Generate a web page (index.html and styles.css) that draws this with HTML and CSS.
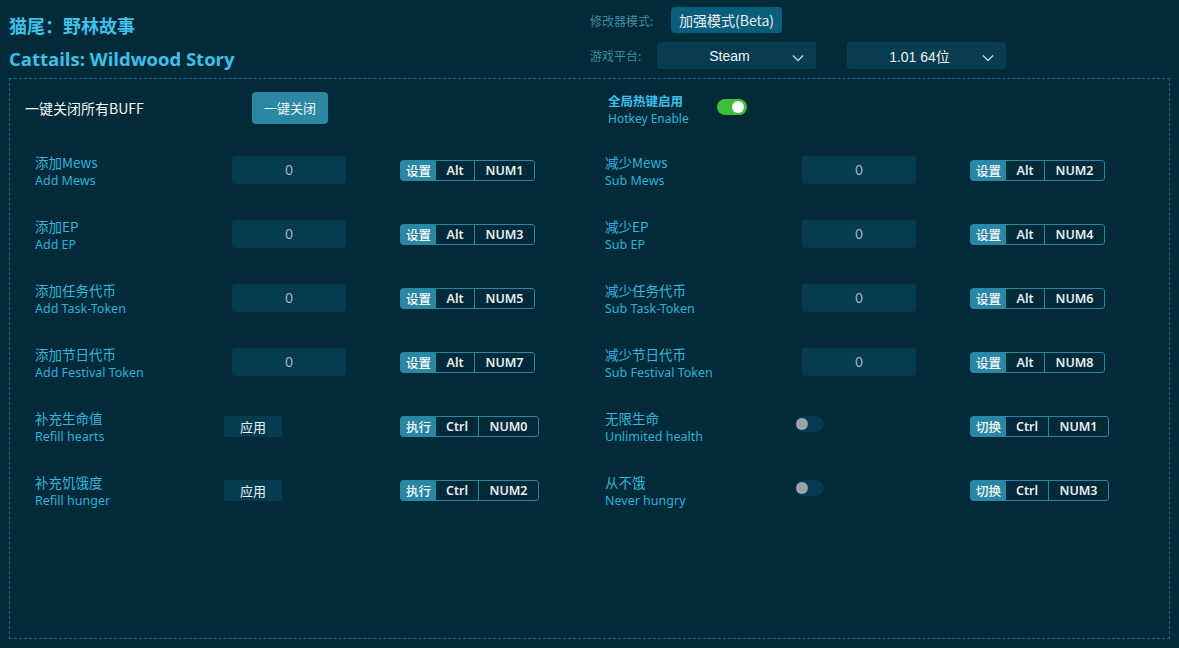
FILE: index.html
```html
<!DOCTYPE html>
<html lang="zh">
<head>
<meta charset="utf-8">
<link rel="stylesheet" href="styles.css">
</head>
<body>
<div class="page">
  <header class="header">
    <div class="titles">
      <div class="title-cn">猫尾：野林故事</div>
      <div class="title-en">Cattails: Wildwood Story</div>
    </div>
    <div class="settings">
      <div class="set-row">
        <span class="set-label">修改器模式:</span>
        <span class="mode-btn">加强模式(Beta)</span>
      </div>
      <div class="set-row">
        <span class="set-label">游戏平台:</span>
        <div class="select sel-platform"><span>Steam</span><svg class="chev" viewBox="0 0 12 8" width="12" height="8"><path d="M1 1.5 6 6.5 11 1.5" fill="none" stroke="#c8d6dc" stroke-width="1.3"/></svg></div>
        <div class="select sel-version"><span>1.01 64位</span><svg class="chev" viewBox="0 0 12 8" width="12" height="8"><path d="M1 1.5 6 6.5 11 1.5" fill="none" stroke="#c8d6dc" stroke-width="1.3"/></svg></div>
      </div>
    </div>
  </header>

  <main class="panel">
    <div class="top-row">
      <div class="buff">
        <span class="buff-label">一键关闭所有BUFF</span>
        <span class="btn-close">一键关闭</span>
      </div>
      <div class="hotkey-enable">
        <div class="he-text">
          <div class="he-cn">全局热键启用</div>
          <div class="he-en">Hotkey Enable</div>
        </div>
        <span class="toggle on"><span class="knob"></span></span>
      </div>
    </div>

    <div class="grid">
      <div class="item">
        <div class="lbl"><div class="cn">添加Mews</div><div class="en">Add Mews</div></div>
        <div class="ctl"><div class="num">0</div></div>
        <div class="hk"><span class="hk-a">设置</span><span class="hk-m">Alt</span><span class="hk-k">NUM1</span></div>
      </div>
      <div class="item">
        <div class="lbl"><div class="cn">减少Mews</div><div class="en">Sub Mews</div></div>
        <div class="ctl"><div class="num">0</div></div>
        <div class="hk"><span class="hk-a">设置</span><span class="hk-m">Alt</span><span class="hk-k">NUM2</span></div>
      </div>

      <div class="item">
        <div class="lbl"><div class="cn">添加EP</div><div class="en">Add EP</div></div>
        <div class="ctl"><div class="num">0</div></div>
        <div class="hk"><span class="hk-a">设置</span><span class="hk-m">Alt</span><span class="hk-k">NUM3</span></div>
      </div>
      <div class="item">
        <div class="lbl"><div class="cn">减少EP</div><div class="en">Sub EP</div></div>
        <div class="ctl"><div class="num">0</div></div>
        <div class="hk"><span class="hk-a">设置</span><span class="hk-m">Alt</span><span class="hk-k">NUM4</span></div>
      </div>

      <div class="item">
        <div class="lbl"><div class="cn">添加任务代币</div><div class="en">Add Task-Token</div></div>
        <div class="ctl"><div class="num">0</div></div>
        <div class="hk"><span class="hk-a">设置</span><span class="hk-m">Alt</span><span class="hk-k">NUM5</span></div>
      </div>
      <div class="item">
        <div class="lbl"><div class="cn">减少任务代币</div><div class="en">Sub Task-Token</div></div>
        <div class="ctl"><div class="num">0</div></div>
        <div class="hk"><span class="hk-a">设置</span><span class="hk-m">Alt</span><span class="hk-k">NUM6</span></div>
      </div>

      <div class="item">
        <div class="lbl"><div class="cn">添加节日代币</div><div class="en">Add Festival Token</div></div>
        <div class="ctl"><div class="num">0</div></div>
        <div class="hk"><span class="hk-a">设置</span><span class="hk-m">Alt</span><span class="hk-k">NUM7</span></div>
      </div>
      <div class="item">
        <div class="lbl"><div class="cn">减少节日代币</div><div class="en">Sub Festival Token</div></div>
        <div class="ctl"><div class="num">0</div></div>
        <div class="hk"><span class="hk-a">设置</span><span class="hk-m">Alt</span><span class="hk-k">NUM8</span></div>
      </div>

      <div class="item">
        <div class="lbl"><div class="cn">补充生命值</div><div class="en">Refill hearts</div></div>
        <div class="ctl"><span class="apply">应用</span></div>
        <div class="hk"><span class="hk-a">执行</span><span class="hk-m wide">Ctrl</span><span class="hk-k">NUM0</span></div>
      </div>
      <div class="item">
        <div class="lbl"><div class="cn">无限生命</div><div class="en">Unlimited health</div></div>
        <div class="ctl"><span class="toggle off"><span class="knob"></span></span></div>
        <div class="hk"><span class="hk-a">切换</span><span class="hk-m wide">Ctrl</span><span class="hk-k">NUM1</span></div>
      </div>

      <div class="item">
        <div class="lbl"><div class="cn">补充饥饿度</div><div class="en">Refill hunger</div></div>
        <div class="ctl"><span class="apply">应用</span></div>
        <div class="hk"><span class="hk-a">执行</span><span class="hk-m wide">Ctrl</span><span class="hk-k">NUM2</span></div>
      </div>
      <div class="item">
        <div class="lbl"><div class="cn">从不饿</div><div class="en">Never hungry</div></div>
        <div class="ctl"><span class="toggle off"><span class="knob"></span></span></div>
        <div class="hk"><span class="hk-a">切换</span><span class="hk-m wide">Ctrl</span><span class="hk-k">NUM3</span></div>
      </div>
    </div>
  </main>
</div>
</body>
</html>
```

FILE: styles.css
```css
* { box-sizing: border-box; }
html, body { margin: 0; padding: 0; }
body {
  background: #022a38;
  font-family: "Noto Sans", "Noto Sans CJK SC", sans-serif;
  color: #e6eef1;
  width: 1179px;
  height: 648px;
  overflow: hidden;
}
.page { padding: 0 9px 0 9px; }

.header {
  display: flex;
  height: 78px;
}
.titles { width: 581px; padding-top: 11px; }
.title-cn {
  font-family: "Noto Sans CJK SC", sans-serif;
  font-weight: 700;
  font-size: 18px;
  line-height: 28px;
  color: #3dc0ea;
}
.title-en {
  font-family: "Open Sans", "Noto Sans CJK SC", sans-serif;
  font-weight: 700;
  font-size: 18.5px;
  line-height: 28px;
  margin-top: 6px;
  color: #3dc0ea;
}
.settings { padding-top: 7px; display: flex; flex-direction: column; gap: 9px; }
.set-row { display: flex; align-items: center; height: 26px; }
.set-label {
  font-family: "Noto Sans CJK SC", sans-serif;
  font-size: 12px;
  color: #3f8aa2;
  width: 81px;
}
.mode-btn {
  font-family: "Noto Sans CJK SC", sans-serif;
  background: #0b5e7b;
  color: #e8f0f3;
  font-size: 14px;
  height: 26px;
  line-height: 26px;
  padding: 0 8px;
  border-radius: 4px;
}
.set-row:nth-child(2) { height: 27px; }
.set-row:nth-child(2) .set-label { width: 67px; }
.select {
  position: relative;
  background: #083c50;
  border-radius: 3px;
  height: 27px;
  width: 159px;
  display: flex;
  align-items: center;
  justify-content: center;
  padding-right: 14px;
  font-family: "Liberation Sans", "Noto Sans CJK SC", sans-serif;
  font-size: 14px;
  color: #eef3f5;
}
.sel-version { margin-left: 31px; }
.chev { position: absolute; right: 12px; top: 12px; }

.panel {
  border: 1px dashed #176a88;
  height: 561px;
  padding: 13px 0 0 0;
}
.top-row {
  display: flex;
  align-items: center;
  height: 32px;
}
.buff { display: flex; align-items: center; width: 598px; padding-left: 15px; }
.buff-label {
  font-family: "Noto Sans CJK SC", sans-serif;
  font-size: 14px;
  color: #f2f6f8;
  width: 227px;
}
.btn-close {
  font-family: "Noto Sans CJK SC", sans-serif;
  background: #2a88a4;
  color: #f2f7f9;
  font-size: 13px;
  height: 32px;
  line-height: 32px;
  padding: 0 12px;
  border-radius: 4px;
}
.hotkey-enable { display: flex; align-items: center; }
.he-text { width: 109px; padding-top: 4px; }
.he-cn {
  font-family: "Noto Sans CJK SC", sans-serif;
  font-weight: 700;
  font-size: 12.5px;
  line-height: 18px;
  color: #3dc0ea;
}
.he-en {
  font-size: 12px;
  line-height: 18px;
  color: #34b2dc;
}
.hotkey-enable .toggle { margin-top: -2px; }

.toggle {
  display: inline-block;
  position: relative;
  width: 30px;
  height: 16px;
  border-radius: 8px;
}
.toggle .knob {
  position: absolute;
  top: 2px;
  width: 12px;
  height: 12px;
  border-radius: 50%;
}
.toggle.on { background: #3dbf3d; }
.toggle.on .knob { right: 3px; background: #ffffff; }
.toggle.off { background: #073a4e; width: 29px; }
.toggle.off .knob { left: 1px; background: #9aa4aa; }

.grid {
  display: grid;
  grid-template-columns: 570px 570px;
  padding-left: 25px;
  margin-top: 14px;
}
.item {
  display: grid;
  grid-template-columns: 189px 176px auto;
  align-items: center;
  height: 64px;
}
.lbl { padding-top: 3px; }
.lbl .cn {
  font-family: "Noto Sans CJK SC", sans-serif;
  font-size: 13.5px;
  line-height: 18px;
  color: #35b4dc;
}
.lbl .en {
  font-size: 12.5px;
  line-height: 18px;
  margin-top: 1px;
  color: #2fb0da;
}
.num {
  margin-left: 8px;
  width: 114px;
  height: 28px;
  line-height: 28px;
  background: #053c50;
  border-radius: 4px;
  text-align: center;
  font-size: 14px;
  color: #a0b8c2;
}
.apply {
  display: inline-block;
  font-family: "Noto Sans CJK SC", sans-serif;
  width: 58px;
  height: 21px;
  line-height: 21px;
  text-align: center;
  background: #063c50;
  color: #e8eff2;
  font-size: 13px;
  border-radius: 3px;
}
.ctl .toggle { margin-left: 1px; }
.hk {
  display: flex;
  height: 21px;
  border: 1px solid #2a87a4;
  border-radius: 3px;
  width: max-content;
  font-size: 12.5px;
  font-weight: 600;
  color: #e6eef1;
}
.hk span { display: flex; align-items: center; justify-content: center; }
.hk-a {
  font-family: "Noto Sans CJK SC", sans-serif;
  background: #2a87a4;
  color: #f4f8fa;
  width: 35px;
  font-size: 12.5px;
  font-weight: 500;
}
.hk-m { width: 39px; border-right: 1px solid #2a87a4; }
.hk-m.wide { width: 43px; }
.hk-k { width: 59px; }
```
